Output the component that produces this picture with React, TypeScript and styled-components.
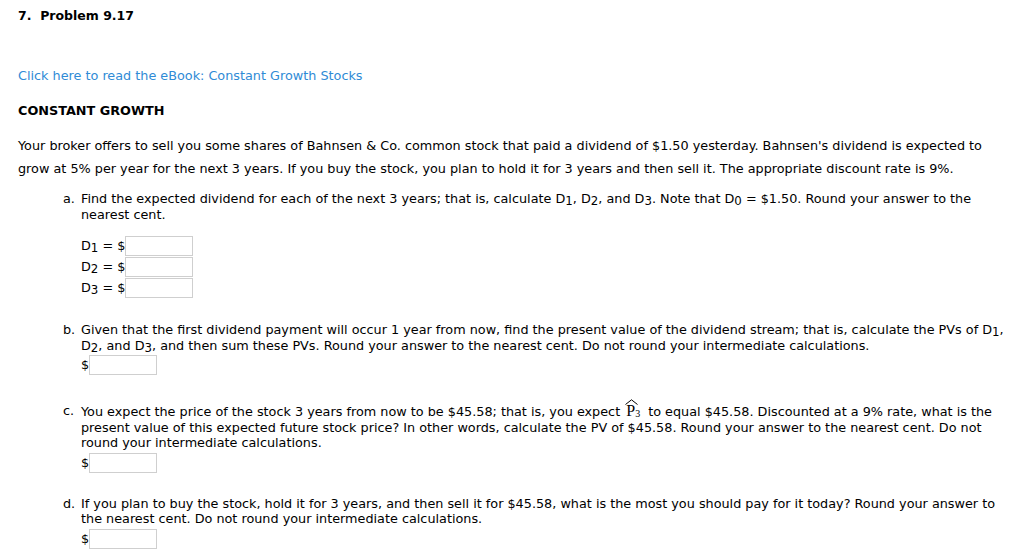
import React from 'react';
import styled, { createGlobalStyle } from 'styled-components';

const GlobalStyle = createGlobalStyle`
  body {
    margin: 0;
    background: #fff;
    color: #000;
    font-family: 'DejaVu Sans', Verdana, sans-serif;
    font-size: 12.8px;
  }
`;

const Page = styled.div`
  padding: 8px 10px 0 18px;
`;

const Title = styled.h1`
  margin: 0;
  font-size: 12.5px;
  font-weight: bold;
  line-height: 16px;
`;

const BookLink = styled.a`
  display: block;
  margin-top: 44px;
  color: #2f8bd6;
  text-decoration: none;
  line-height: 16px;
`;

const Heading = styled.h2`
  margin: 19px 0 0 0;
  font-size: 12.8px;
  font-weight: bold;
  line-height: 16px;
`;

const Intro = styled.p`
  margin: 15px 0 0 0;
  line-height: 23px;
`;

const Part = styled.div<{ $gap: number }>`
  display: flex;
  margin: ${(p) => p.$gap}px 0 0 45px;
  line-height: 15.5px;
`;

const Letter = styled.span`
  flex: 0 0 18px;
`;

const Body = styled.div`
  flex: 1;
`;

const Fields = styled.div`
  display: flex;
  flex-direction: column;
  gap: 1px;
  margin-top: 14px;
`;

const FieldRow = styled.div`
  display: flex;
  align-items: center;
  height: 20px;
`;

const FieldLabel = styled.span`
  flex: 0 0 44px;
  white-space: nowrap;
`;

const Money = styled.div`
  display: flex;
  align-items: center;
  height: 20px;
  margin-top: 2px;
`;

const Dollar = styled.span`
  width: 8px;
`;

const Box = styled.input`
  box-sizing: border-box;
  flex: 0 0 68px;
  width: 68px;
  height: 20px;
  margin: 0;
  border: 1px solid #cfcfcf;
  padding: 0 3px;
  font: inherit;
`;

const Sub = styled.sub`
  font-size: 0.92em;
  vertical-align: -2px;
  line-height: 0;
`;

const Hat = styled.span`
  position: relative;
  display: inline-block;
  font-family: 'Liberation Serif', 'Times New Roman', serif;
  font-size: 16px;
  line-height: 1;
  margin: 0 4px 0 2px;
`;

const HatMark = styled.svg`
  position: absolute;
  left: -1px;
  top: -4px;
  width: 13px;
  height: 6px;
`;

const SmallSub = styled.sub`
  font-size: 10px;
  vertical-align: -1px;
  line-height: 0;
`;

const D = ({ n }: { n: number }) => (
  <>
    D<Sub>{n}</Sub>
  </>
);

const PHat = () => (
  <Hat>
    P
    <HatMark viewBox="0 0 13 6">
      <path d="M0.5 5.5 L6.5 0.8 L12.5 5.5" fill="none" stroke="#000" strokeWidth="1" />
    </HatMark>
    <SmallSub>3</SmallSub>
  </Hat>
);

const AnswerBox = () => (
  <Money>
    <Dollar>$</Dollar>
    <Box type="text" />
  </Money>
);

export default function App() {
  return (
    <>
      <GlobalStyle />
      <Page>
        <Title>7.&nbsp; Problem 9.17</Title>
        <BookLink href="#">Click here to read the eBook: Constant Growth Stocks</BookLink>
        <Heading>CONSTANT GROWTH</Heading>
        <Intro>
          Your broker offers to sell you some shares of Bahnsen &amp; Co. common stock that paid a dividend of
          $1.50 yesterday. Bahnsen's dividend is expected to grow at 5% per year for the next 3 years. If you
          buy the stock, you plan to hold it for 3 years and then sell it. The appropriate discount rate is 9%.
        </Intro>

        <Part $gap={11}>
          <Letter>a.</Letter>
          <Body>
            Find the expected dividend for each of the next 3 years; that is, calculate <D n={1} />, <D n={2} />,
            and <D n={3} />. Note that D<Sub>0</Sub> = $1.50. Round your answer to the nearest cent.
            <Fields>
              {[1, 2, 3].map((n) => (
                <FieldRow key={n}>
                  <FieldLabel>
                    <D n={n} /> = $
                  </FieldLabel>
                  <Box type="text" />
                </FieldRow>
              ))}
            </Fields>
          </Body>
        </Part>

        <Part $gap={24}>
          <Letter>b.</Letter>
          <Body>
            Given that the first dividend payment will occur 1 year from now, find the present value of the
            dividend stream; that is, calculate the PVs of <D n={1} />, <D n={2} />, and <D n={3} />, and then sum
            these PVs. Round your answer to the nearest cent. Do not round your intermediate calculations.
            <AnswerBox />
          </Body>
        </Part>

        <Part $gap={28}>
          <Letter>c.</Letter>
          <Body>
            You expect the price of the stock 3 years from now to be $45.58; that is, you expect <PHat /> to equal
            $45.58. Discounted at a 9% rate, what is the present value of this expected future stock price? In
            other words, calculate the PV of $45.58. Round your answer to the nearest cent. Do not round your
            intermediate calculations.
            <AnswerBox />
          </Body>
        </Part>

        <Part $gap={23}>
          <Letter>d.</Letter>
          <Body>
            If you plan to buy the stock, hold it for 3 years, and then sell it for $45.58, what is the most you
            should pay for it today? Round your answer to the nearest cent. Do not round your intermediate
            calculations.
            <AnswerBox />
          </Body>
        </Part>
      </Page>
    </>
  );
}
